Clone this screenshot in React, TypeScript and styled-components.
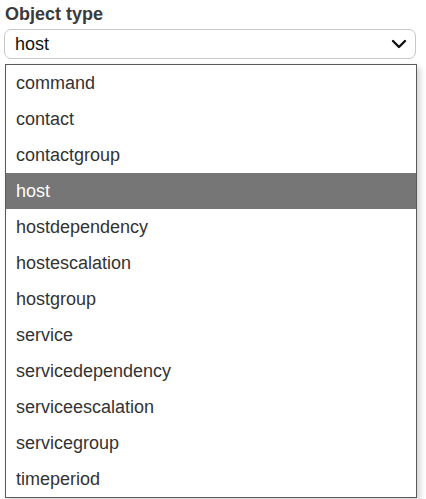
import styled, { createGlobalStyle } from 'styled-components';

const GlobalStyle = createGlobalStyle`
  body {
    margin: 0;
    background: #fff;
    font-family: "Liberation Sans", Arial, sans-serif;
  }
`;

const options = [
  'command',
  'contact',
  'contactgroup',
  'host',
  'hostdependency',
  'hostescalation',
  'hostgroup',
  'service',
  'servicedependency',
  'serviceescalation',
  'servicegroup',
  'timeperiod',
];

export default function App() {
  const selected = 'host';

  return (
    <>
      <GlobalStyle />
      <Page>
        <Field>
          <Label>Object type</Label>
          <SelectBox>
            <span>{selected}</span>
            <svg width="16" height="10" viewBox="0 0 16 10">
              <path d="M2 2l6 6 6-6" fill="none" stroke="#111" strokeWidth="2.4" strokeLinecap="round" strokeLinejoin="round" />
            </svg>
          </SelectBox>
          <Menu>
            {options.map((o) => (
              <Option key={o} $active={o === selected}>
                {o}
              </Option>
            ))}
          </Menu>
        </Field>
        <Behind>
          <GhostLabel />
          <GhostInput />
          <GhostInput />
          <GhostLabel />
          <GhostInput />
          <GhostInput />
          <GhostLabel />
          <GhostInput />
        </Behind>
      </Page>
    </>
  );
}

const Page = styled.div`
  padding: 4px 10px 0 4px;
  height: 499px;
  box-sizing: border-box;
  overflow: hidden;
`;

const Field = styled.div`
  position: relative;
`;

const Label = styled.div`
  font-size: 18px;
  font-weight: bold;
  color: #3a3a3a;
  padding-left: 1px;
  line-height: 20px;
  margin-bottom: 5px;
`;

const SelectBox = styled.div`
  height: 30px;
  box-sizing: border-box;
  border: 1px solid #c8c8c8;
  border-radius: 7px;
  display: flex;
  align-items: center;
  justify-content: space-between;
  padding: 0 8px 0 10px;
  font-size: 18px;
  color: #111;
`;

const Menu = styled.div`
  position: absolute;
  top: 60px;
  left: 1px;
  width: 412px;
  box-sizing: border-box;
  background: #fff;
  border: 1px solid #5a5a5a;
  box-shadow: 3px 3px 6px rgba(0, 0, 0, 0.18);
  z-index: 2;
`;

const Option = styled.div<{ $active: boolean }>`
  height: 36px;
  display: flex;
  align-items: center;
  padding-left: 10px;
  font-size: 18px;
  color: ${(p) => (p.$active ? '#fff' : '#333')};
  background: ${(p) => (p.$active ? '#767676' : 'transparent')};
`;

const Behind = styled.div`
  display: flex;
  flex-direction: column;
  gap: 8px;
  margin-top: 22px;
  padding-left: 1px;
`;

const GhostLabel = styled.div`
  width: 80px;
  height: 14px;
  background: #e3a34a;
  border-radius: 2px;
`;

const GhostInput = styled.div`
  height: 28px;
  border: 1px solid #bbb;
  border-radius: 6px;
`;
